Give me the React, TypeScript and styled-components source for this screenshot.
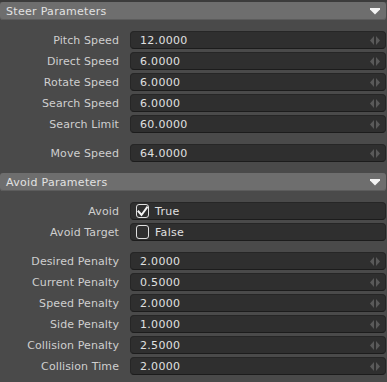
import React from "react";
import styled, { createGlobalStyle } from "styled-components";

type Row =
  | { label: string; kind: "number"; value: string }
  | { label: string; kind: "bool"; value: boolean };

type Section = {
  title: string;
  groups: Row[][];
};

const sections: Section[] = [
  {
    title: "Steer Parameters",
    groups: [
      [
        { label: "Pitch Speed", kind: "number", value: "12.0000" },
        { label: "Direct Speed", kind: "number", value: "6.0000" },
        { label: "Rotate Speed", kind: "number", value: "6.0000" },
        { label: "Search Speed", kind: "number", value: "6.0000" },
        { label: "Search Limit", kind: "number", value: "60.0000" },
      ],
      [{ label: "Move Speed", kind: "number", value: "64.0000" }],
    ],
  },
  {
    title: "Avoid Parameters",
    groups: [
      [
        { label: "Avoid", kind: "bool", value: true },
        { label: "Avoid Target", kind: "bool", value: false },
      ],
      [
        { label: "Desired Penalty", kind: "number", value: "2.0000" },
        { label: "Current Penalty", kind: "number", value: "0.5000" },
        { label: "Speed Penalty", kind: "number", value: "2.0000" },
        { label: "Side Penalty", kind: "number", value: "1.0000" },
        { label: "Collision Penalty", kind: "number", value: "2.5000" },
        { label: "Collision Time", kind: "number", value: "2.0000" },
      ],
    ],
  },
];

const DropArrow = () => (
  <svg width="10" height="7" viewBox="0 0 10 7">
    <polygon points="0,0 10,0 10,1.5 5,6.5 0,1.5" fill="#f4f4f4" />
  </svg>
);

const SpinArrows = () => (
  <svg width="10" height="9" viewBox="0 0 10 9">
    <polygon points="4,0 4,9 0,4.5" fill="#5a5a5a" />
    <polygon points="6,0 6,9 10,4.5" fill="#5a5a5a" />
  </svg>
);

const CheckMark = () => (
  <svg width="11" height="11" viewBox="0 0 11 11">
    <path
      d="M1.5 5.5 L4.5 9 L10 1.5"
      fill="none"
      stroke="#f4f4f4"
      strokeWidth="2"
      strokeLinecap="square"
    />
  </svg>
);

const PropertyRow = ({ row }: { row: Row }) => (
  <RowWrapper>
    <Label>{row.label}</Label>
    <Field>
      {row.kind === "number" ? (
        <>
          <Value>{row.value}</Value>
          <SpinArrows />
        </>
      ) : (
        <Toggle>
          <CheckBox>{row.value && <CheckMark />}</CheckBox>
          <Value>{row.value ? "True" : "False"}</Value>
        </Toggle>
      )}
    </Field>
  </RowWrapper>
);

export default function App() {
  return (
    <>
      <GlobalStyle />
      <Panel>
        {sections.map((section) => (
          <div key={section.title}>
            <Header>
              <HeaderTitle>{section.title}</HeaderTitle>
              <DropArrow />
            </Header>
            <Body>
              {section.groups.map((group, i) => (
                <Group key={i}>
                  {group.map((row) => (
                    <PropertyRow key={row.label} row={row} />
                  ))}
                </Group>
              ))}
            </Body>
          </div>
        ))}
      </Panel>
    </>
  );
}

const GlobalStyle = createGlobalStyle`
  html, body {
    margin: 0;
    padding: 0;
    background: #4a4a4a;
  }
  body {
    font-family: "DejaVu Sans", Verdana, sans-serif;
    font-size: 11px;
    letter-spacing: 0.3px;
  }
`;

const Panel = styled.div`
  width: 387px;
  height: 382px;
  background: #4a4a4a;
  border-top: 2px solid #3c3c3c;
  box-sizing: border-box;
  overflow: hidden;
`;

const Header = styled.div`
  height: 18px;
  margin-right: 1px;
  padding: 0 6px;
  display: flex;
  align-items: center;
  justify-content: space-between;
  background: #6e6e6e;
  border-radius: 3px;
  box-shadow: inset 0 -1px 0 #5c5c5c;
  box-sizing: border-box;
`;

const HeaderTitle = styled.span`
  color: #e2e2e2;
  font-size: 11px;
`;

const Body = styled.div`
  padding: 11px 1px 11px 0;
  display: flex;
  flex-direction: column;
  gap: 11px;
`;

const Group = styled.div`
  display: flex;
  flex-direction: column;
  gap: 3px;
`;

const RowWrapper = styled.div`
  display: grid;
  grid-template-columns: 119px 1fr;
  column-gap: 11px;
  align-items: center;
  height: 18px;
`;

const Label = styled.span`
  text-align: right;
  color: #cfcfcf;
  white-space: nowrap;
  letter-spacing: 0.1px;
`;

const Field = styled.div`
  height: 18px;
  box-sizing: border-box;
  display: flex;
  align-items: center;
  justify-content: space-between;
  padding: 0 5px 0 9px;
  background: #2f2f2f;
  border: 1px solid #262626;
  border-bottom-color: #1c1c1c;
  border-radius: 4px;
`;

const Value = styled.span`
  color: #e0e0e0;
`;

const Toggle = styled.div`
  display: flex;
  align-items: center;
  gap: 6px;
  margin-left: -4px;
`;

const CheckBox = styled.div`
  width: 13px;
  height: 14px;
  box-sizing: border-box;
  border: 1px solid #e0e0e0;
  border-radius: 3px;
  display: flex;
  align-items: center;
  justify-content: center;
`;
